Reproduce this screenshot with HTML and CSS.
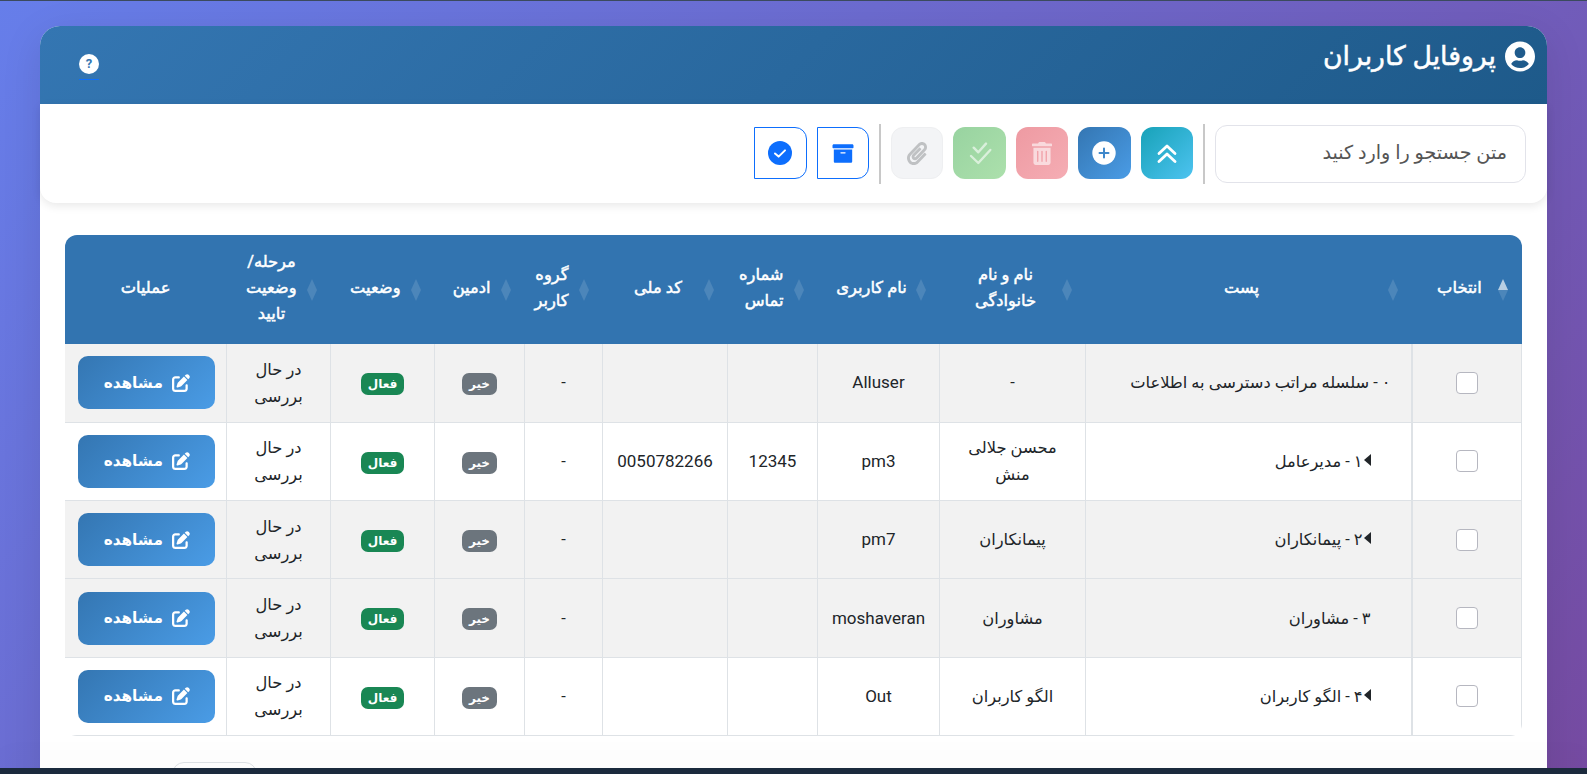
FILE: index.html
```html
<!DOCTYPE html>
<html dir="rtl" lang="fa">
<head>
  <meta charset="utf-8">
  <title>پروفایل کاربران</title>
  <link rel="stylesheet" href="styles.css">
</head>
<body>
  <svg class="icon-defs" aria-hidden="true">
    <symbol id="icon-edit" viewBox="0 0 512 512"><path d="M471.6 21.7c-21.9-21.9-57.3-21.9-79.2 0L362.3 51.7l97.9 97.9 30.1-30.1c21.9-21.9 21.9-57.3 0-79.2L471.6 21.7zm-299.2 220c-6.1 6.1-10.8 13.6-13.5 21.9l-29.6 88.8c-2.9 8.6-.6 18.1 5.8 24.6s15.9 8.7 24.6 5.8l88.8-29.6c8.2-2.7 15.7-7.4 21.9-13.5L437.7 172.3 339.7 74.3 172.4 241.7zM96 64C43 64 0 107 0 160V416c0 53 43 96 96 96H352c53 0 96-43 96-96V320c0-17.7-14.3-32-32-32s-32 14.3-32 32v96c0 17.7-14.3 32-32 32H96c-17.7 0-32-14.3-32-32V160c0-17.7 14.3-32 32-32h96c17.7 0 32-14.3 32-32s-14.3-32-32-32H96z"/></symbol>
  </svg>

  <div class="top-line"></div>

  <div class="page">
    <div class="card">
      <div class="card-header">
        <h1 class="page-title">
          <svg class="title-icon" viewBox="0 0 496 512"><path d="M248 8C111 8 0 119 0 256s111 248 248 248 248-111 248-248S385 8 248 8zm0 96c48.6 0 88 39.4 88 88s-39.4 88-88 88-88-39.4-88-88 39.4-88 88-88zm0 344c-58.7 0-111.3-26.6-146.5-68.2 18.8-35.4 55.6-59.8 98.5-59.8 2.4 0 4.8.4 7.1 1.1 13 4.2 26.6 6.9 40.9 6.9 14.3 0 28-2.7 40.9-6.9 2.3-.7 4.7-1.1 7.1-1.1 42.9 0 79.7 24.4 98.5 59.8C359.3 421.4 306.7 448 248 448z"/></svg>
          پروفایل کاربران
        </h1>
        <a class="help-link" href="#"><span class="help-icon">?</span></a>
      </div>

      <div class="toolbar">
        <input class="search-input" type="text" placeholder="متن جستجو را وارد کنید">
        <div class="toolbar-sep"></div>
        <button class="tool-btn teal">
          <svg width="20" height="20" viewBox="0 0 20 20" fill="none" stroke="#fff" stroke-width="2.8" stroke-linecap="round" stroke-linejoin="round"><polyline points="2,10.5 10,3 18,10.5"/><polyline points="2,18.5 10,11 18,18.5"/></svg>
        </button>
        <button class="tool-btn blue">
          <svg width="24" height="24" viewBox="0 0 24 24"><circle cx="12" cy="12" r="11.7" fill="#fff"/><path d="M12 7.5v9M7.5 12h9" stroke="#3f88cb" stroke-width="2" stroke-linecap="round"/></svg>
        </button>
        <button class="tool-btn red">
          <svg width="20" height="23" viewBox="0 0 448 512" fill="#fff"><path d="M32 464a48 48 0 0 0 48 48h288a48 48 0 0 0 48-48V128H32zm272-256a16 16 0 0 1 32 0v224a16 16 0 0 1-32 0zm-96 0a16 16 0 0 1 32 0v224a16 16 0 0 1-32 0zm-96 0a16 16 0 0 1 32 0v224a16 16 0 0 1-32 0zM432 32H312l-9.4-18.7A24 24 0 0 0 281.1 0H166.8a23.72 23.72 0 0 0-21.4 13.3L136 32H16A16 16 0 0 0 0 48v32a16 16 0 0 0 16 16h416a16 16 0 0 0 16-16V48a16 16 0 0 0-16-16z"/></svg>
        </button>
        <button class="tool-btn green">
          <svg width="24" height="24" viewBox="0 0 24 24" fill="none" stroke="#fff" stroke-width="2.4" stroke-linecap="round" stroke-linejoin="round"><polyline points="5.7,6.7 10.3,11.3 18,2.6"/><polyline points="3,15 10.3,22 22.3,9"/></svg>
        </button>
        <button class="tool-btn attach">
          <svg width="20" height="23" viewBox="0 0 448 512" fill="#bfc1c3"><path d="M43.246 466.142c-58.43-60.289-57.341-157.511 1.386-217.581L254.392 34c44.316-45.332 116.351-45.336 160.671 0 43.89 44.894 43.943 117.329 0 162.276L232.214 383.128c-29.855 30.537-78.633 30.111-107.982-.998-28.275-29.97-27.368-77.473 1.452-106.953l143.743-146.835c6.182-6.314 16.312-6.422 22.626-.241l22.861 22.379c6.315 6.182 6.422 16.312.241 22.626L171.427 319.927c-4.932 5.045-5.236 13.428-.648 18.292 4.372 4.634 11.245 4.711 15.688.165l182.849-186.851c19.613-20.062 19.613-52.725-.011-72.798-19.189-19.627-49.957-19.637-69.154 0L90.39 293.295c-34.763 35.56-35.299 93.12-1.191 128.313 34.01 35.093 88.985 35.137 123.058.286l172.06-175.999c6.177-6.319 16.307-6.433 22.626-.256l22.877 22.364c6.319 6.177 6.434 16.307.256 22.626l-172.06 175.998c-59.576 60.938-155.943 60.216-214.77-.485z"/></svg>
        </button>
        <div class="toolbar-sep"></div>
        <button class="tool-btn outline">
          <svg width="24" height="21" viewBox="0 0 512 512" fill="#0d6efd"><path d="M32 448c0 17.7 14.3 32 32 32h384c17.7 0 32-14.3 32-32V160H32v288zm160-212c0-6.6 5.4-12 12-12h104c6.6 0 12 5.4 12 12v8c0 6.6-5.4 12-12 12H204c-6.6 0-12-5.4-12-12v-8zM480 32H32C14.3 32 0 46.3 0 64v48c0 8.8 7.2 16 16 16h480c8.8 0 16-7.2 16-16V64c0-17.7-14.3-32-32-32z"/></svg>
        </button>
        <button class="tool-btn outline">
          <svg width="24" height="24" viewBox="0 0 24 24"><circle cx="12" cy="12" r="12" fill="#0d6efd"/><polyline points="7,12.5 10.6,15.6 17,9.4" fill="none" stroke="#fff" stroke-width="2" stroke-linecap="round" stroke-linejoin="round"/></svg>
        </button>
      </div>

      <div class="card-body">
        <div class="table-wrap">
          <table class="users-table">
            <thead>
              <tr>
                <th class="col-select sortable sorted">انتخاب</th>
                <th class="col-post sortable">پست</th>
                <th class="col-name sortable">نام و نام<br>خانوادگی</th>
                <th class="col-username sortable">نام کاربری</th>
                <th class="col-phone sortable">شماره<br>تماس</th>
                <th class="col-nid sortable">کد ملی</th>
                <th class="col-group sortable">گروه<br>کاربر</th>
                <th class="col-admin sortable">ادمین</th>
                <th class="col-status sortable">وضعیت</th>
                <th class="col-stage sortable">مرحله/<br>وضعیت<br>تایید</th>
                <th class="col-ops">عملیات</th>
              </tr>
            </thead>
            <tbody>
              <tr class="striped">
                <td class="select-cell"><span class="checkbox"></span></td>
                <td class="post-cell">۰ - سلسله مراتب دسترسی به اطلاعات</td>
                <td>-</td>
                <td class="latin">Alluser</td>
                <td></td>
                <td></td>
                <td>-</td>
                <td><span class="badge badge-gray">خیر</span></td>
                <td><span class="badge badge-green">فعال</span></td>
                <td>در حال<br>بررسی</td>
                <td class="ops-cell"><button class="view-btn"><svg class="edit-icon"><use href="#icon-edit"/></svg>مشاهده</button></td>
              </tr>
              <tr>
                <td class="select-cell"><span class="checkbox"></span></td>
                <td class="post-cell level-1"><span class="expander"></span>۱ - مدیرعامل</td>
                <td>محسن جلالی<br>منش</td>
                <td class="latin">pm3</td>
                <td class="latin">12345</td>
                <td class="latin">0050782266</td>
                <td>-</td>
                <td><span class="badge badge-gray">خیر</span></td>
                <td><span class="badge badge-green">فعال</span></td>
                <td>در حال<br>بررسی</td>
                <td class="ops-cell"><button class="view-btn"><svg class="edit-icon"><use href="#icon-edit"/></svg>مشاهده</button></td>
              </tr>
              <tr class="striped">
                <td class="select-cell"><span class="checkbox"></span></td>
                <td class="post-cell level-1"><span class="expander"></span>۲ - پیمانکاران</td>
                <td>پیمانکاران</td>
                <td class="latin">pm7</td>
                <td></td>
                <td></td>
                <td>-</td>
                <td><span class="badge badge-gray">خیر</span></td>
                <td><span class="badge badge-green">فعال</span></td>
                <td>در حال<br>بررسی</td>
                <td class="ops-cell"><button class="view-btn"><svg class="edit-icon"><use href="#icon-edit"/></svg>مشاهده</button></td>
              </tr>
              <tr class="striped">
                <td class="select-cell"><span class="checkbox"></span></td>
                <td class="post-cell level-1">۳ - مشاوران</td>
                <td>مشاوران</td>
                <td class="latin">moshaveran</td>
                <td></td>
                <td></td>
                <td>-</td>
                <td><span class="badge badge-gray">خیر</span></td>
                <td><span class="badge badge-green">فعال</span></td>
                <td>در حال<br>بررسی</td>
                <td class="ops-cell"><button class="view-btn"><svg class="edit-icon"><use href="#icon-edit"/></svg>مشاهده</button></td>
              </tr>
              <tr>
                <td class="select-cell"><span class="checkbox"></span></td>
                <td class="post-cell level-1"><span class="expander"></span>۴ - الگو کاربران</td>
                <td>الگو کاربران</td>
                <td class="latin">Out</td>
                <td></td>
                <td></td>
                <td>-</td>
                <td><span class="badge badge-gray">خیر</span></td>
                <td><span class="badge badge-green">فعال</span></td>
                <td>در حال<br>بررسی</td>
                <td class="ops-cell"><button class="view-btn"><svg class="edit-icon"><use href="#icon-edit"/></svg>مشاهده</button></td>
              </tr>
            </tbody>
          </table>
        </div>
        <div class="pager"><span class="pager-btn"></span></div>
      </div>
    </div>
  </div>

  <div class="taskbar"></div>
</body>
</html>
```

FILE: styles.css
```css
* {
  box-sizing: border-box;
}
html, body {
  height: 100%;
}
body {
  margin: 0;
  overflow: hidden;
  font-family: Roboto, "DejaVu Sans", sans-serif;
  font-size: 16.3px;
  color: #212529;
  background: linear-gradient(135deg, #667eea 0%, #764ba2 100%);
}
.icon-defs {
  display: none;
}
.top-line {
  height: 1px;
  background: #3b4a5e;
}
.page {
  padding: 25px 40px 0;
}
.card {
  background: #fff;
  border-radius: 20px 20px 0 0;
  box-shadow: 0 10px 40px rgba(0, 0, 0, 0.1);
}

/* header */
.card-header {
  height: 78px;
  display: flex;
  justify-content: space-between;
  padding: 15px 12px 0 39px;
  color: white;
  border-radius: 20px 20px 0 0;
  background: linear-gradient(135deg, #3476b2 0%, #1e5a8a 100%);
}
.page-title {
  margin: 0;
  display: flex;
  align-items: flex-start;
  gap: 9px;
  font-size: 26.7px;
  font-weight: 400;
  line-height: 30px;
  -webkit-text-stroke: 0.5px white;
}
.title-icon {
  width: 30px;
  height: 31px;
  fill: white;
  flex-shrink: 0;
}
.help-link {
  display: block;
  margin-top: 13px;
  height: 26px;
  width: 20px;
  border-bottom: 1px solid #0d6efd;
  text-decoration: none;
}
.help-icon {
  display: block;
  width: 20px;
  height: 20px;
  border-radius: 50%;
  background: white;
  color: #3476b2;
  font-size: 13px;
  font-weight: 700;
  line-height: 20px;
  text-align: center;
}

/* toolbar */
.toolbar {
  height: 99px;
  padding: 0 21px;
  display: flex;
  align-items: center;
  gap: 10px;
  background: white;
  border-radius: 0 0 16px 16px;
  box-shadow: 0 3px 10px rgba(0, 0, 0, 0.09);
}
.search-input {
  width: 311px;
  height: 58px;
  padding: 0 18px 3px;
  border: 1.5px solid #e2e3ea;
  border-radius: 12px;
  font-family: inherit;
  font-size: 19.2px;
  background: white;
}
.search-input::placeholder {
  color: #555;
  opacity: 1;
}
.toolbar-sep {
  width: 2px;
  height: 60px;
  background: #c8c8c8;
}
.tool-btn {
  width: 52.4px;
  height: 52px;
  margin-bottom: 1px;
  padding: 0;
  display: flex;
  align-items: center;
  justify-content: center;
  border: none;
  border-radius: 12px;
  cursor: pointer;
}
.tool-btn.teal {
  background: linear-gradient(135deg, #17a2b8 0%, #4dc3f0 100%);
}
.tool-btn.blue {
  background: linear-gradient(135deg, #3476b2 0%, #4a9ce6 100%);
}
.tool-btn.red {
  background: linear-gradient(135deg, #ee9aa2 0%, #f5adb4 100%);
}
.tool-btn.green {
  background: linear-gradient(135deg, #98d3a0 0%, #ace0ac 100%);
}
.tool-btn.red svg, .tool-btn.green svg {
  opacity: 0.6;
}
.tool-btn.attach {
  background: #f3f4f6;
  border: 1px solid #eeeff1;
}
.tool-btn.outline {
  background: white;
  border: 1px solid #0d6efd;
  border-radius: 0 12px 12px 0;
}

/* table */
.card-body {
  padding: 32px 25px 0;
}
.table-wrap {
  border-radius: 12px;
  overflow: hidden;
}
.users-table {
  width: 100%;
  table-layout: fixed;
  border-collapse: collapse;
  text-align: center;
}
.users-table th {
  position: relative;
  height: 109px;
  padding: 6px 34px 10px 20px;
  color: white;
  background: #3274b0;
  font-size: 16.3px;
  font-weight: 400;
  line-height: 26px;
  white-space: nowrap;
  -webkit-text-stroke: 0.5px white;
}
.users-table th.col-ops {
  padding: 6px 8px 10px;
}
.users-table th.col-username {
  padding: 6px 28px 10px 14px;
}
.col-select { width: 110px; }
.col-post { width: 326px; }
.col-name { width: 146px; }
.col-username { width: 122px; }
.col-phone { width: 90px; }
.col-nid { width: 125px; }
.col-group { width: 78px; }
.col-admin { width: 90px; }
.col-status { width: 104px; }
.col-stage { width: 104px; }
.col-ops { width: 162px; }

/* sort arrows sit over the header cell */
.sortable::before,
.sortable::after {
  content: "";
  position: absolute;
  right: 14px;
  top: 50%;
  border-left: 5px solid transparent;
  border-right: 5px solid transparent;
}
.sortable::before {
  margin-top: -11px;
  border-bottom: 11px solid rgba(255, 255, 255, 0.13);
}
.sortable::after {
  margin-top: 0;
  border-top: 11px solid rgba(255, 255, 255, 0.13);
}
.sorted::before {
  border-bottom-color: rgba(255, 255, 255, 0.65);
}
.users-table td {
  height: 78.3px;
  padding: 8px;
  line-height: 27px;
  border: 1px solid #dee2e6;
  border-top: none;
}
.users-table td:last-child {
  border-left: none;
}
.users-table td.select-cell {
  border-left-width: 2px;
}
.users-table td.latin {
  font-size: 17px;
}
.users-table td.ops-cell {
  padding-left: 11px;
}
.users-table tr.striped td {
  background: #f2f2f2;
}
.users-table td.post-cell {
  text-align: right;
  padding-right: 20px;
}
.users-table td.post-cell.level-1 {
  padding-right: 40px;
}
.expander {
  display: inline-block;
  margin-left: 1px;
  vertical-align: 1px;
  border-top: 6px solid transparent;
  border-bottom: 6px solid transparent;
  border-right: 7px solid #212529;
}
.checkbox {
  display: block;
  width: 22px;
  height: 22px;
  margin: 0 auto;
  border: 1.5px solid #b6b7c0;
  border-radius: 4px;
  background: white;
}
.badge {
  display: inline-block;
  height: 22px;
  padding: 0 7px;
  border-radius: 7px;
  color: white;
  font-size: 12px;
  font-weight: 700;
  line-height: 22px;
  vertical-align: middle;
}
.badge-gray {
  background: #6c757d;
}
.badge-green {
  background: #198754;
}
.view-btn {
  width: 137px;
  height: 53px;
  display: flex;
  align-items: center;
  justify-content: center;
  gap: 9px;
  margin: 0 auto;
  border: none;
  border-radius: 10px;
  color: white;
  font-family: inherit;
  font-size: 15.3px;
  font-weight: 700;
  background: linear-gradient(135deg, #3476b2 0%, #4a9ce6 100%);
  cursor: pointer;
}
.edit-icon {
  width: 18px;
  height: 18px;
  fill: white;
}
.pager {
  padding-top: 26px;
  display: flex;
  justify-content: flex-end;
}
.pager-btn {
  width: 85px;
  height: 38px;
  margin-left: 107px;
  border: 1px solid #dee2e6;
  border-radius: 12px;
}
.taskbar {
  position: fixed;
  left: 0;
  right: 0;
  bottom: 0;
  height: 6px;
  background: #1b2a3d;
  box-shadow: 0 -12px 24px rgba(0, 0, 0, 0.05);
}
```
